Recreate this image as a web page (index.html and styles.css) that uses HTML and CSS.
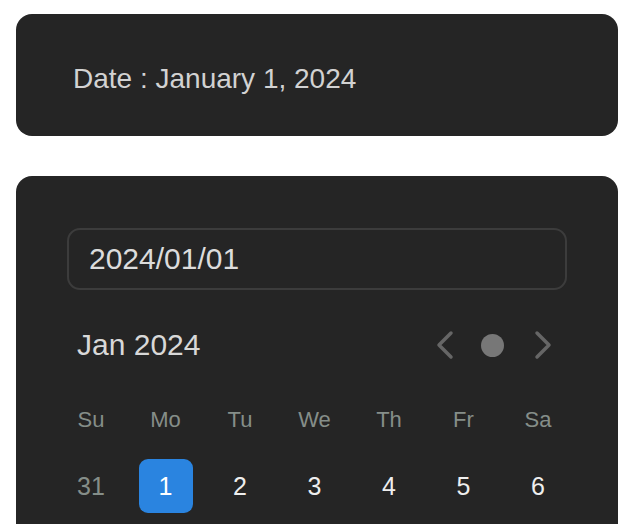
FILE: index.html
```html
<!DOCTYPE html>
<html lang="en">

<head>
    <meta charset="UTF-8">
    <meta name="viewport" content="width=device-width, initial-scale=1.0">
    <title>Date Picker</title>
    <link rel="stylesheet" href="styles.css">
</head>

<body>
    <div class="page">
        <div class="card summary">
            <p class="date-text">Date : January 1, 2024</p>
        </div>

        <div class="card picker">
            <div class="date-input">2024/01/01</div>

            <div class="month-head">
                <span class="month-title">Jan 2024</span>
                <div class="month-nav">
                    <svg class="chev" width="20" height="32" viewBox="0 0 20 32">
                        <path d="M15 4 L3 16 L15 28" />
                    </svg>
                    <span class="today-dot"></span>
                    <svg class="chev" width="20" height="32" viewBox="0 0 20 32">
                        <path d="M4 4 L16 16 L4 28" />
                    </svg>
                </div>
            </div>

            <div class="week-row">
                <span>Su</span>
                <span>Mo</span>
                <span>Tu</span>
                <span>We</span>
                <span>Th</span>
                <span>Fr</span>
                <span>Sa</span>
            </div>

            <div class="day-row">
                <span class="day muted">31</span>
                <span class="day selected">1</span>
                <span class="day">2</span>
                <span class="day">3</span>
                <span class="day">4</span>
                <span class="day">5</span>
                <span class="day">6</span>
            </div>
        </div>
    </div>
</body>

</html>
```

FILE: styles.css
```css
* {
    margin: 0;
    padding: 0;
    box-sizing: border-box;
}

body {
    background-color: #ffffff;
    font-family: "Liberation Sans", Arial, Helvetica, sans-serif;
}

.page {
    padding: 14px 18px 0 16px;
    display: flex;
    flex-direction: column;
    gap: 40px;
}

.card {
    background-color: #252525;
    border-radius: 16px;
}

/* summary card */

.summary {
    height: 122px;
    padding: 45px 58px 0 57px;
}

.date-text {
    font-size: 28px;
    line-height: 40px;
    color: #d2d2d2;
}

/* picker card */

.picker {
    height: 400px;
    padding: 52px 51px 0;
}

.date-input {
    height: 62px;
    border: 2px solid #3c3c3c;
    border-radius: 13px;
    padding: 0 20px;
    display: flex;
    align-items: center;
    font-size: 30px;
    color: #dcdcdc;
}

.month-head {
    display: flex;
    align-items: center;
    justify-content: space-between;
    height: 40px;
    margin-top: 35px;
    padding: 0 14px 0 10px;
}

.month-title {
    font-size: 30px;
    color: #d8d8d8;
}

.month-nav {
    display: flex;
    align-items: center;
}

.chev path {
    fill: none;
    stroke: #666666;
    stroke-width: 3.5;
    stroke-linecap: round;
    stroke-linejoin: round;
}

.today-dot {
    width: 23px;
    height: 23px;
    border-radius: 50%;
    background-color: #777777;
    margin: 0 29px 0 25px;
}

.week-row,
.day-row {
    display: grid;
    grid-template-columns: repeat(7, 54px);
    justify-content: space-between;
    margin: 0 2px 0 -3px;
}

.week-row {
    margin-top: 35px;
    height: 40px;
    align-items: center;
}

.week-row span {
    text-align: center;
    font-size: 22px;
    color: #858e89;
}

.day-row {
    margin-top: 19px;
}

.day {
    height: 54px;
    border-radius: 9px;
    display: flex;
    align-items: center;
    justify-content: center;
    font-size: 25px;
    color: #eeeeee;
}

.day.muted {
    color: #858e89;
}

.day.selected {
    background-color: #2a84e0;
    color: #ffffff;
}
```
